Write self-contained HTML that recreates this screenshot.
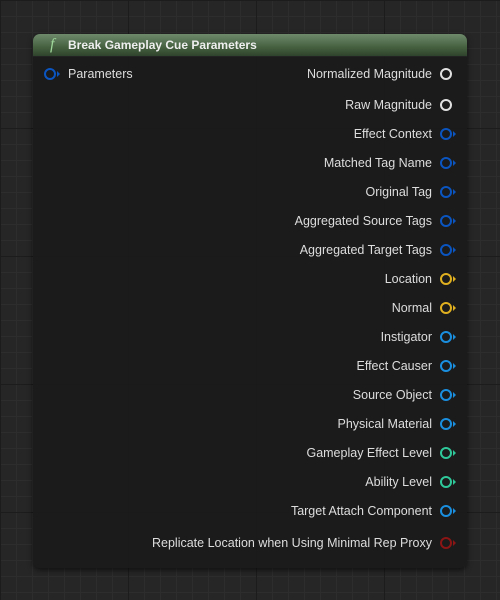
<!DOCTYPE html>
<html><head><style>
html,body{margin:0;padding:0;width:500px;height:600px;overflow:hidden;}
body{background-color:#262626;
background-image:
linear-gradient(to right,#1c1c1c 1px,transparent 1px),
linear-gradient(to bottom,#1c1c1c 1px,transparent 1px),
linear-gradient(to right,#2d2d2d 1px,transparent 1px),
linear-gradient(to bottom,#2d2d2d 1px,transparent 1px);
background-size:128px 128px,128px 128px,16px 16px,16px 16px;
font-family:"Liberation Sans",sans-serif;}
.node{position:absolute;left:33px;top:34px;width:434px;height:534px;background:rgba(26,26,26,0.95);border-radius:7px;box-shadow:0 2px 6px rgba(0,0,0,0.6);overflow:hidden;}
.hdr{height:22px;background:linear-gradient(to bottom,#6d8a6b,#45603f 60%,#2f432c);border-bottom:1px solid #222;color:#eee;font-weight:bold;font-size:12px;line-height:22px;padding-left:35px;position:relative;}
.hdr i{position:absolute;left:17px;top:0;color:#9fd79a;font-family:"Liberation Serif",serif;font-size:16px;font-weight:normal;}
.row{position:absolute;font-size:12.5px;color:#ddd;height:16px;line-height:16px;text-align:right;white-space:nowrap;}
.pin{position:absolute;width:8px;height:8px;border-radius:50%;border:2px solid;}
.tri{position:absolute;width:0;height:0;border-top:3px solid transparent;border-bottom:3px solid transparent;border-left:3px solid;}
</style></head><body>
<div class="node">
<div class="hdr"><i>f</i>Break Gameplay Cue Parameters</div>
<div class="pin" style="left:11px;top:34px;border-color:#0a55c0"></div>
<div class="tri" style="left:24px;top:37px;border-left-color:#0a55c0"></div>
<div style="position:absolute;left:35px;top:32px;font-size:12.5px;color:#ddd;line-height:16px">Parameters</div>
</div>
<div id="rows"></div>
<script>
var R=[["Normalized Magnitude",74,"#e0e0e0",0],["Raw Magnitude",105,"#e0e0e0",0],["Effect Context",134,"#0a55c0",1],["Matched Tag Name",163,"#0a55c0",1],["Original Tag",192,"#0a55c0",1],["Aggregated Source Tags",221,"#0a55c0",1],["Aggregated Target Tags",250,"#0a55c0",1],["Location",279,"#e0b020",1],["Normal",308,"#e0b020",1],["Instigator",337,"#1a8fe0",1],["Effect Causer",366,"#1a8fe0",1],["Source Object",395,"#1a8fe0",1],["Physical Material",424,"#1a8fe0",1],["Gameplay Effect Level",453,"#2ec89a",1],["Ability Level",482,"#2ec89a",1],["Target Attach Component",511,"#1a8fe0",1],["Replicate Location when Using Minimal Rep Proxy",543,"#8b1414",1]];
var h="";
R.forEach(function(r){
h+='<div class="row" style="right:68px;top:'+(r[1]-8)+'px">'+r[0]+'</div>';
h+='<div class="pin" style="left:440px;top:'+(r[1]-6)+'px;border-color:'+r[2]+'"></div>';
if(r[3])h+='<div class="tri" style="left:453px;top:'+(r[1]-3)+'px;border-left-color:'+r[2]+'"></div>';
});
document.getElementById("rows").innerHTML=h;
</script>
</body></html>
